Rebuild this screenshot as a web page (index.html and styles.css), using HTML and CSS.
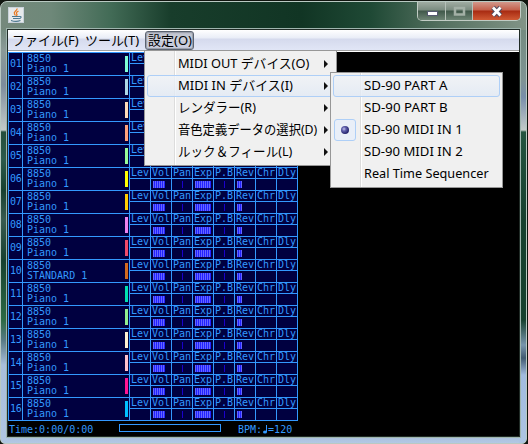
FILE: index.html
```html
<!DOCTYPE html>
<html lang="ja">
<head>
<meta charset="utf-8">
<title>MIDI</title>
<link rel="stylesheet" href="styles.css">
</head>
<body>
<div class="window">
  <header class="titlebar">
    <svg class="java" width="16" height="16" viewBox="0 0 16 16">
      <rect x=".5" y=".5" width="15" height="15" fill="#e6e9eb" stroke="#c8d2da"/>
      <path d="M9 1.500C9.500 4 5 4.500 6.500 7l1 1.500M10.500 4C8 5.500 8 6 9 7.500L8.500 9" fill="none" stroke="#e87820" stroke-width="1.300"/>
      <path d="M4 9.500h7.500M5 11.500h5.500M11.500 9.500c2.500-.5 2 2-1 2.300M3 13.500c3 1 7 1 9.500 0" fill="none" stroke="#4c7890" stroke-width="1.100"/>
    </svg>
    <div class="controls">
      <span class="ctl min"><svg width="27" height="18"><rect x="9.500" y="9.500" width="10" height="4" fill="#fff" stroke="#555a70"/></svg></span>
      <span class="ctl max"><svg width="26" height="18"><rect x="9" y="6" width="9" height="6.500" fill="none" stroke="#a3b0a6" stroke-width="2.500"/></svg></span>
      <span class="ctl close"><svg width="47" height="18"><path d="M20 5.500l7.500 8M27.500 5.500l-7.500 8" stroke="#514c60" stroke-width="4.800"/><path d="M20 5.500l7.500 8M27.500 5.500l-7.500 8" stroke="#fff" stroke-width="2.800"/></svg></span>
    </div>
  </header>
  <div class="client">
    <nav class="menubar">
      <span class="m1"><b>ファイル(F)</b></span>
      <span class="m2"><b>ツール(T)</b></span>
      <span class="m3 open"><b>設定(O)</b></span>
    </nav>
    <main class="tracks" id="tracks"></main>
    <footer class="status">
      <span class="time">Time:0:00/0:00</span>
      <span class="progress"></span>
      <span class="bpm">BPM:<svg width="6" height="9" viewBox="0 0 6 9"><path d="M4.500 0v7" stroke="#3399ff"/><ellipse cx="3" cy="7" rx="2" ry="1.500" fill="#3399ff"/></svg>=120</span>
    </footer>
  </div>
</div>
<div class="menu main-menu">
  <div class="item"><b data-w="131">MIDI OUT デバイス(O)</b><i></i></div>
  <div class="item hot"><b data-w="115">MIDI IN デバイス(I)</b><i></i></div>
  <div class="item"><b data-w="78">レンダラー(R)</b><i></i></div>
  <div class="item"><b data-w="139">音色定義データの選択(D)</b><i></i></div>
  <div class="item"><b data-w="114">ルック＆フィール(L)</b><i></i></div>
</div>
<div class="menu sub-menu">
  <div class="item hot"><b data-w="84">SD-90 PART A</b></div>
  <div class="item"><b data-w="84">SD-90 PART B</b></div>
  <div class="item"><span class="radio"></span><b data-w="99">SD-90 MIDI IN 1</b></div>
  <div class="item"><b data-w="99">SD-90 MIDI IN 2</b></div>
  <div class="item"><b data-w="125">Real Time Sequencer</b></div>
</div>
<script src="app.js"></script>
</body>
</html>
```
FILE: styles.css
```css
* { box-sizing: border-box; }
body { margin: 0; width: 528px; height: 444px; overflow: hidden; background: #10150f; }
b { font-weight: normal; display: inline-block; white-space: nowrap; transform-origin: 0 50%; }
.window {
  width: 527px; height: 443px; margin-top: 1px; padding: 0 6px 6px;
  border: 1px solid #b9c9c2; border-radius: 7px 7px 5px 5px;
  display: flex; flex-direction: column;
  background:
    linear-gradient(#748b80 0, #8b9a98 20px, #7c8c9c 55px, #c3cbc9 100px, #244e3c 102px, #2c5a4c 130px, #17402f 160px, #385b50 190px, #17402f 230px, #2c6a44 290px, #577a84 310px, #a9bfdb 335px, #b2c8e4) 0 28px / 7px 100% no-repeat,
    linear-gradient(#748b80 0, #7e9494 50px, #788eaa 67px, #c3cbc9 100px, #245440 102px, #17402f 190px, #17402f 290px, #7895ad 315px, #405a70 328px, #a1bbdf 345px, #b2c8e4) 100% 28px / 7px 100% no-repeat,
    linear-gradient(#a8bddb, #b2c8e4) 0 100% / 100% 8px no-repeat,
    linear-gradient(90deg, #75897c, #6e8879 50px, #426b56 110px, #183d2b 170px, #113524 300px, #1f4935 370px, #54705f 440px, #839588 528px);
}
.titlebar { height: 27px; display: flex; justify-content: space-between; flex: none; }
.java { margin: 5px 0 0 1px; }
.controls { display: flex; height: 19px; margin-right: -1px; border: 1px solid #c1ccc4; border-top: 0; border-radius: 0 0 5px 5px; overflow: hidden; }
.ctl { height: 18px; border-right: 1px solid #b6c1b9; background: linear-gradient(#a0aca2 0, #7b8c80 8px, #40584a 9px, #6d8474 18px); }
.ctl svg { display: block; }
.close { border-right: 0; background: linear-gradient(#d2988b 0, #c4604b 8px, #a82b12 9px, #d05a34 18px); }
.client { width: 513px; height: 408px; border: 1px solid #202b26; outline: 1px solid #9fb5ae; background: #000; display: flex; flex-direction: column; }
.menubar {
  height: 21px; flex: none; display: flex; border-bottom: 1px solid #a0a0a0;
  background: linear-gradient(#fff 0, #e9edf7 8px, #d5daed 9px, #e1e6f6 20px);
  font: 13px/18px "Noto Sans", "Noto Sans CJK JP", sans-serif; color: #000;
}
.menubar span { height: 19px; margin-top: 1px; padding-left: 4px; }
.menubar b { margin-top: -1px; }
.m1 { width: 73px; } .m2 { width: 64px; } .m3 { width: 49px; }
.menubar .open { border: 1px solid #5b6370; border-radius: 3px; padding-left: 2px; line-height: 16px; background: linear-gradient(#bbbfca, #d0d4df 50%, #c2c7d7 51%, #cdd2e2); box-shadow: inset 0 0 1px 1px #979da9; }
.tracks { border-top: 1px solid #fff; flex: none; color: #39f; }
.tracks, .status { font: 10px/10px "DejaVu Sans Mono", monospace; }
.row { display: flex; width: 290px; height: 23px; border: 1px solid #39f; border-bottom: 0; background: #000040; }
.row:last-child { height: 24px; border-bottom: 1px solid #39f; }
.row > div { flex: none; }
.row .num { width: 13px; line-height: 22px; padding-left: 1px; letter-spacing: -.2px; }
.name { width: 108px; border: solid #39f; border-width: 0 1px; display: flex; justify-content: space-between; padding: 1px 0 0 4px; }
.name p { margin: 0; }
.name u { width: 3px; height: 16px; margin: 2px 1px 0 0; }
.col { width: 21px; border-right: 1px solid #39f; }
.col:last-child { width: 20px; border-right: 0; }
.col h6 { margin: 0; font: inherit; height: 11px; line-height: 10px; padding-left: 1px; border-bottom: 1px solid #39f; white-space: nowrap; }
.meter { height: 7px; margin: 2px 0 0 2px; background: repeating-linear-gradient(90deg, #66f 0 1px, #22f 1px 2px); }
.meter.tick { margin-left: 10px; background: #1a00cc; }
.status { display: flex; color: #39f; height: 15px; padding: 4px 0 0 1px; }
.time { width: 110px; }
.progress { width: 102px; height: 8px; margin-top: -1px; border: 1px solid #39f; }
.bpm { margin-left: 17px; white-space: pre; }
.bpm svg { vertical-align: -1px; }
.menu {
  position: absolute; border: 1px solid #979797; padding: 2px; height: 116px;
  background: linear-gradient(90deg, transparent 29px, #dcdcdc 29px 30px, #fff 30px 31px, transparent 31px) #f0f0f0;
  font: 13px/22px "Noto Sans", "Noto Sans CJK JP", sans-serif; color: #000;
}
.main-menu { left: 144px; top: 50px; width: 193px; }
.sub-menu { left: 330px; top: 72px; width: 173px; }
.item { height: 22px; padding-left: 30px; display: grid; grid-template-columns: minmax(0, 1fr) 9px; align-items: center; position: relative; border: 1px solid transparent; border-radius: 3px; line-height: 18px; }
.item b { justify-self: start; margin-top: -2px; }
.item i { width: 0; border: solid transparent; border-width: 4px 0 4px 4px; border-left-color: #111; }
.hot { border-color: #aecff7; background: linear-gradient(#f0f3f7cc, #e2eaf5cc); }
.radio { position: absolute; left: 0; top: -1px; width: 22px; height: 22px; border: 1px solid #aecff7; border-radius: 3px; background: #e9eff8; }
.radio::after { content: ""; display: block; width: 8px; height: 8px; margin: 6px; border-radius: 50%; background: radial-gradient(circle at 3px 3px, #c8c8f0 0, #6060ac 2px, #23236c 5px); }
```
FILE: app.js
```js
const colors = ["#7fffd4", "#add8e6", "#ffdab9", "#ffa07a", "#98fb98", "#ffff00", "#ffcc00", "#ee82ee", "#f04868", "#d2691e", "#00e0b0", "#90ee90", "#fff0d0", "#ffc0cb", "#ff1493", "#00bfff"];
const cols = [["Lev"], ["Vol", 12], ["Pan", 1], ["Exp", 16], ["P.B", 1], ["Rev", 5], ["Chr"], ["Dly"]];
document.getElementById("tracks").innerHTML = colors.map((c, i) =>
  `<div class="row"><div class="num">${String(i + 1).padStart(2, "0")}</div>` +
  `<div class="name"><p>8850<br>${i === 9 ? "STANDARD 1" : "Piano 1"}</p><u style="background:${c}"></u></div>` +
  cols.map(([n, w]) => `<div class="col"><h6>${n}</h6>${w ? `<div class="meter${w === 1 ? " tick" : ""}" style="width:${w}px"></div>` : ""}</div>`).join("") +
  `</div>`).join("");
document.querySelectorAll("b[data-w]").forEach(b => {
  b.style.transform = `scaleX(${b.dataset.w / b.offsetWidth})`;
});
```
